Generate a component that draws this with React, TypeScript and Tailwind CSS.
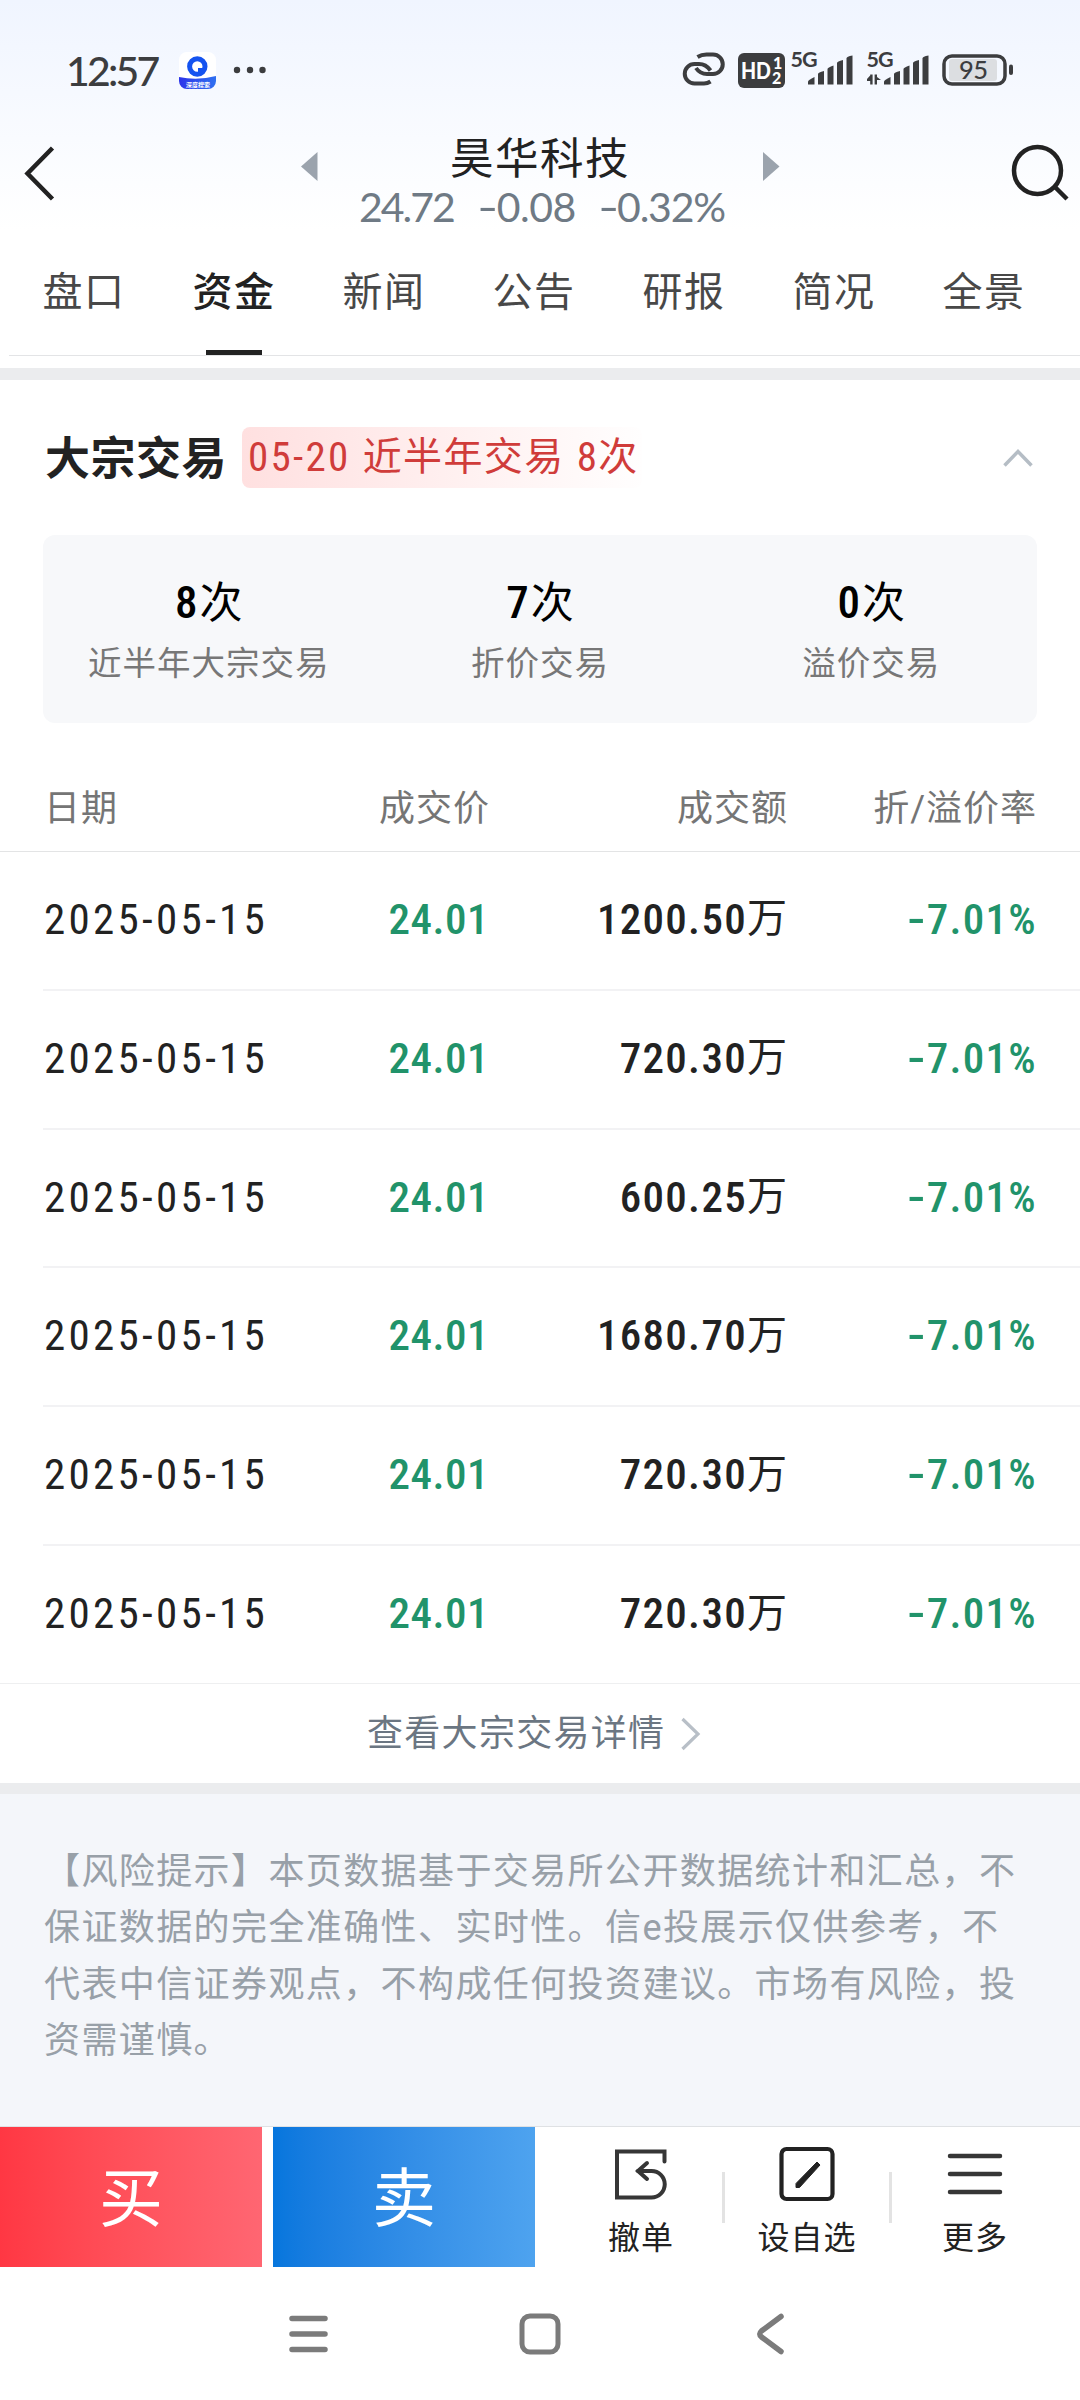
import React from "react";

type Trade = {
  date: string;
  price: string;
  amount: string;
  rate: string;
};

const tabs = ["盘口", "资金", "新闻", "公告", "研报", "简况", "全景"];

const stats = [
  { value: "8", label: "近半年大宗交易" },
  { value: "7", label: "折价交易" },
  { value: "0", label: "溢价交易" },
];

const trades: Trade[] = [
  { date: "2025-05-15", price: "24.01", amount: "1200.50", rate: "-7.01%" },
  { date: "2025-05-15", price: "24.01", amount: "720.30", rate: "-7.01%" },
  { date: "2025-05-15", price: "24.01", amount: "600.25", rate: "-7.01%" },
  { date: "2025-05-15", price: "24.01", amount: "1680.70", rate: "-7.01%" },
  { date: "2025-05-15", price: "24.01", amount: "720.30", rate: "-7.01%" },
  { date: "2025-05-15", price: "24.01", amount: "720.30", rate: "-7.01%" },
];

const riskLines = [
  "【风险提示】本页数据基于交易所公开数据统计和汇总，不",
  "保证数据的完全准确性、实时性。信e投展示仅供参考，不",
  "代表中信证券观点，不构成任何投资建议。市场有风险，投",
  "资需谨慎。",
];

const Signal = ({ arrows = false }: { arrows?: boolean }) => (
  <svg width="64" height="52" viewBox="0 -8 64 52" fill="#3c3d3f">
    <text x="-0.500" y="16" fontFamily="Lato" fontWeight="700" fontSize="21.500" textLength="27">5G</text>
    {arrows && (
      <>
        <path d="M5.600 23.500V33.500H3.200V30H-2L3.200 24.500V23.500z" />
        <path d="M7.600 33.500V23.500H10V26L14 29H10V33.500z" />
      </>
    )}
    <path d="M17 33.500v-3q0-1.500 6.500-4.500v7.500z" />
    <path d="M27 33.500V23q0-1.500 6-3v13.500z" />
    <path d="M36.500 33.500V18q0-1.500 6-3.500v19z" />
    <path d="M46 33.500V12q0-1.500 6-3v24.500z" />
    <path d="M55.500 33.500V7.500q0-2 6-3v29z" />
  </svg>
);

const StatusBar = () => (
  <div className="flex h-[140px] items-center">
    <span className="ml-[66px] w-[113px] font-[Lato] text-[41px] leading-none font-medium tracking-[-2.800px] text-[#3c3d3f]">
      12:57
    </span>
    <svg width="37" height="37" viewBox="0 0 37 37">
      <defs>
        <linearGradient id="banner" x1="0" x2="1">
          <stop offset="0" stopColor="#2d35ea" />
          <stop offset="1" stopColor="#2f70f0" />
        </linearGradient>
      </defs>
      <rect width="37" height="37" rx="8" fill="#fff" />
      <circle cx="18.300" cy="14.500" r="7.700" fill="none" stroke="#1453f0" strokeWidth="5" />
      <path d="M19 16h5v4h-5z" fill="#1453f0" />
      <path d="M0 25q18 4 37-1v5a8 8 0 0 1-8 8H8a8 8 0 0 1-8-8z" fill="url(#banner)" />
      <text x="7" y="34.500" fontFamily="Noto Sans CJK SC" fontWeight="700" fontSize="6" fill="#fff">深度搜索</text>
    </svg>
    <svg width="34" height="8" viewBox="0 0 34 8" className="ml-[17px]" fill="#3c3d3f">
      <circle cx="4" cy="4" r="3.200" />
      <circle cx="17" cy="4" r="3.200" />
      <circle cx="29.500" cy="4" r="3.200" />
    </svg>

    <svg width="44" height="34" viewBox="0 0 44 34" className="-mt-0.5 ml-[415px]" fill="none" stroke="#3c3d3f" strokeWidth="4">
      <path d="M15.500 5q4-2.500 9-2.500H31a9.750 9.750 0 0 1 0 19.500H25q-7 0-11-6" />
      <path d="M28.500 29.500q-3 2-6.500 2H12.500a9.750 9.750 0 0 1 0-19.500H17q7 0 11.500 6.500" />
    </svg>
    <svg width="47" height="35" viewBox="0 0 47 35" className="ml-3">
      <rect width="47" height="35" rx="6" fill="#3c3d3f" />
      <g fill="#fff" fontFamily="Lato" fontWeight="900">
        <text x="3" y="25.500" fontSize="22" textLength="30" lengthAdjust="spacingAndGlyphs">HD</text>
        <text x="35" y="16" fontSize="16">1</text>
        <text x="34" y="31" fontSize="16">2</text>
      </g>
    </svg>
    <div className="-mt-0.5 ml-1.5 flex gap-3">
      <Signal />
      <Signal arrows />
    </div>
    <svg width="72" height="32" viewBox="0 0 72 32" className="ml-[11px]">
      <rect x="2" y="2" width="61" height="28" rx="8" fill="none" stroke="#3c3d3f" strokeWidth="3.500" />
      <rect x="7" y="5" width="48" height="22" rx="3" fill="#dcdee1" />
      <rect x="67" y="10.500" width="4" height="10.500" rx="2" fill="#3c3d3f" />
      <text x="17" y="25" fontFamily="Lato" fontWeight="500" fontSize="25.500" fill="#3c3d3f" textLength="29">95</text>
    </svg>
  </div>
);

const Minus = () => <span className="mr-[5px] inline-block origin-left scale-x-140">-</span>;

const StockHeader = () => (
  <div className="grid h-[100px] grid-cols-[300px_480px_300px]">
    <svg width="34" height="60" viewBox="0 0 34 60" className="mt-[3px] ml-[22px]" fill="none" stroke="#222" strokeWidth="4.500">
      <path d="M30.500 5L5.500 30.500L30.500 56" />
    </svg>
    <div className="flex flex-col">
      <div className="flex h-[44px] justify-between">
        <svg width="18" height="30" viewBox="0 0 18 30" className="mt-[11px]" fill="#9ba3ad">
          <path d="M1 15.500L17.500 1v29z" />
        </svg>
        <h1 className="-mt-[2px] text-[43.500px] leading-[44px] tracking-[1.500px] text-[#222]">昊华科技</h1>
        <svg width="18" height="30" viewBox="0 0 18 30" className="mt-[11px]" fill="#9ba3ad">
          <path d="M17.500 15.500L1 1v29z" />
        </svg>
      </div>
      <div className="ml-[59px] flex font-[Lato] text-[41px] leading-[46px] whitespace-nowrap text-[#6f7a85]">
        <span className="w-[118px] tracking-[-2px]">24.72</span>
        <span className="w-[121px] tracking-[-0.500px]">
          <Minus />
          0.08
        </span>
        <span className="tracking-[-1.200px]">
          <Minus />
          0.32%
        </span>
      </div>
    </div>
    <svg width="62" height="60" viewBox="0 0 62 60" className="mt-[3px] ml-[230px]" fill="none" stroke="#222" strokeWidth="4.500">
      <circle cx="27.500" cy="27.500" r="23.500" />
      <path d="M44.500 43.500L57 56" />
    </svg>
  </div>
);

const Tabs = () => (
  <div className="ml-[9px] flex h-[116px] border-b border-[#e3e4e6]">
    {tabs.map((tab) => {
      const active = tab === "资金";
      return (
        <div key={tab} className="flex w-[150px] flex-col items-center justify-between">
          <span
            className={`mt-[23px] text-[40px] leading-[60px] tracking-[1.500px] ${
              active ? "font-medium text-[#222]" : "text-[#484848]"
            }`}
          >
            {tab}
          </span>
          {active && <span className="h-[5px] w-[56px] bg-[#222]" />}
        </div>
      );
    })}
  </div>
);

const TradeRow = ({ trade, last }: { trade: Trade; last: boolean }) => (
  <div
    className={`flex flex-1 items-center pb-0.5 font-['Roboto_Condensed','Noto_Sans_CJK_SC',sans-serif] text-[43px] leading-none ${
      last ? "border-b border-[#eeeff0] pl-[44px]" : "ml-[43px] border-b-2 border-[#f2f2f4] pl-px"
    }`}
  >
    <span className="w-[225px] tracking-[3.300px] text-[#222]">{trade.date}</span>
    <span className="w-[220px] text-right font-medium tracking-[0.500px] text-[#21936a]">{trade.price}</span>
    <span className="flex w-[298px] items-center justify-end font-medium text-[#222]">
      <span className="tracking-[1.300px]">{trade.amount}</span>
      <span className="text-[40px] font-normal">万</span>
    </span>
    <span className="w-[250px] text-right font-medium tracking-[1.300px] text-[#21936a]">
      <Minus />
      {trade.rate.slice(1)}
    </span>
  </div>
);

const ActionBar = () => (
  <div className="flex h-[141px] border-t border-[#dfe1e4] bg-white">
    <button className="h-[140px] w-[262px] bg-linear-to-r from-[#ff3743] to-[#ff6672] pt-1.5 text-[64px] leading-none text-white">
      买
    </button>
    <button className="ml-[11px] h-[140px] w-[262px] bg-linear-to-r from-[#0676dd] to-[#4ea3ef] pt-1.5 text-[64px] leading-none text-white">
      卖
    </button>
    <div className="ml-[21px] flex flex-1 items-center text-[32px] leading-[40px] tracking-[1px] text-[#222]">
      <div className="flex w-[166px] flex-col items-center pt-2.5 pl-1">
        <svg width="56" height="56" viewBox="0 0 56 56" fill="none" stroke="#363636" strokeWidth="4" strokeLinecap="round">
          <path d="M51.500 15.500V5.500H4V51.500H38.500a13 13 0 0 0 0-26.500H25" />
          <path d="M34 17L25 25L34 33" />
        </svg>
        <span className="mt-4">撤单</span>
      </div>
      <span className="h-[51px] w-[3px] bg-[#e3e3e3]" />
      <div className="flex w-[164px] flex-col items-center pt-2.5">
        <svg width="56" height="56" viewBox="0 0 56 56" fill="none" stroke="#222">
          <rect x="2.500" y="3" width="51" height="50" rx="5" strokeWidth="4.200" />
          <path d="M17 41.500v-4L38 16L41 19L20.500 41.500z" fill="#222" strokeWidth="1" />
        </svg>
        <span className="mt-4">设自选</span>
      </div>
      <span className="h-[51px] w-[3px] bg-[#e3e3e3]" />
      <div className="flex w-[166px] flex-col items-center pt-2.5">
        <svg width="56" height="56" viewBox="0 0 56 56" stroke="#363636" strokeWidth="4.500" strokeLinecap="round">
          <path d="M3 10H53M3 28H53M3 46H53" />
        </svg>
        <span className="mt-4">更多</span>
      </div>
    </div>
  </div>
);

const App = () => {
  return (
    <div className="flex h-[2400px] w-[1080px] flex-col overflow-hidden bg-white font-[Roboto,'Noto_Sans_CJK_SC',sans-serif]">
      <header className="h-[356px] bg-linear-to-b from-[#f0f5ff] to-white to-[230px]">
        <StatusBar />
        <StockHeader />
        <Tabs />
      </header>
      <div className="mt-3 h-3 bg-[#ebecee]" />

      {/* 大宗交易 */}
      <section className="flex h-[155px] items-center pr-[46px] pl-[45px]">
        <h2 className="pt-[3px] text-[45px] leading-none font-bold tracking-[0.500px] text-[#222]">大宗交易</h2>
        <div className="ml-[15px] flex h-[61px] w-[400px] items-center rounded-lg bg-linear-to-r from-[#ffe0e0] to-[#fffefe] pl-1.5 font-['Roboto_Condensed','Noto_Sans_CJK_SC',sans-serif] text-[39px] leading-none whitespace-nowrap text-[#d03c3a]">
          <span className="text-[41px] tracking-[2.300px]">05-20</span>
          <span className="ml-3 tracking-[1.400px]">近半年交易</span>
          <span className="ml-3 flex items-center tracking-[1.300px]">
            <span className="text-[41px]">8</span>次
          </span>
        </div>
        <svg width="32" height="22" viewBox="0 0 32 22" className="ml-auto" fill="none" stroke="#b5bdc5" strokeWidth="3.500">
          <path d="M2.500 18.500L16 4.500L29.500 18.500" />
        </svg>
      </section>
      <section className="mx-[43px] grid h-[188px] grid-cols-3 rounded-xl bg-[#f7f8fa] pt-[43px] text-center">
        {stats.map((item) => (
          <div key={item.label}>
            <p className="font-['Roboto_Condensed','Noto_Sans_CJK_SC',sans-serif] text-[45px] leading-[50px] text-black">
              <span className="mr-0.5 font-medium">{item.value}</span>
              <span className="text-[43px]">次</span>
            </p>
            <p className="mt-3 text-[33.500px] leading-[48px] tracking-[1px] text-[#777]">{item.label}</p>
          </div>
        ))}
      </section>

      <section className="flex flex-col">
        <div className="mt-[38px] flex h-[91px] items-center border-b border-[#e3e4e5] pt-1.5 pl-[44px] text-[36px] leading-none tracking-[1px] text-[#757575]">
          <span className="w-[225px]">日期</span>
          <span className="w-[221px] text-right">成交价</span>
          <span className="w-[298px] text-right">成交额</span>
          <span className="w-[249px] text-right">折/溢价率</span>
        </div>
        <div className="flex h-[832px] flex-col">
          {trades.map((trade, index) => (
            <TradeRow key={index} trade={trade} last={index === trades.length - 1} />
          ))}
        </div>
      </section>
      <a className="flex h-[99px] items-center pl-[367px] text-[36px] leading-none tracking-[1.300px] text-[#6b7682]">
        查看大宗交易详情
        <svg width="22" height="34" viewBox="0 0 22 34" className="ml-[15px]" fill="none" stroke="#b8bfc7" strokeWidth="3.200">
          <path d="M2.500 2L18 17L2.500 32" />
        </svg>
      </a>
      <div className="h-[11px] bg-[#ebecee]" />

      <section className="h-[332px] bg-[#f4f6fa] pt-[50px] pl-[44px] text-[36px] leading-[56.300px] tracking-[1.400px] whitespace-nowrap text-[#98a0a8]">
        {riskLines.map((line) => (
          <p key={line}>{line}</p>
        ))}
      </section>
      <ActionBar />

      {/* 系统导航栏 */}
      <nav className="flex h-[133px] items-center justify-center gap-[187px]">
        <svg width="44" height="44" viewBox="0 0 44 44" stroke="#7b7b7b" strokeWidth="5.500" strokeLinecap="round">
          <path d="M5 6.500H38M5 22H38M5 37.500H38" />
        </svg>
        <svg width="44" height="44" viewBox="0 0 44 44" fill="none" stroke="#7b7b7b" strokeWidth="5">
          <rect x="4" y="4" width="36" height="36" rx="8" />
        </svg>
        <svg width="44" height="44" viewBox="0 0 44 44" fill="none" stroke="#7b7b7b" strokeWidth="5.500" strokeLinecap="round">
          <path d="M32 4.500L12.500 19Q9 22 12.500 25L32 39.500" />
        </svg>
      </nav>
    </div>
  );
};

export default App;
